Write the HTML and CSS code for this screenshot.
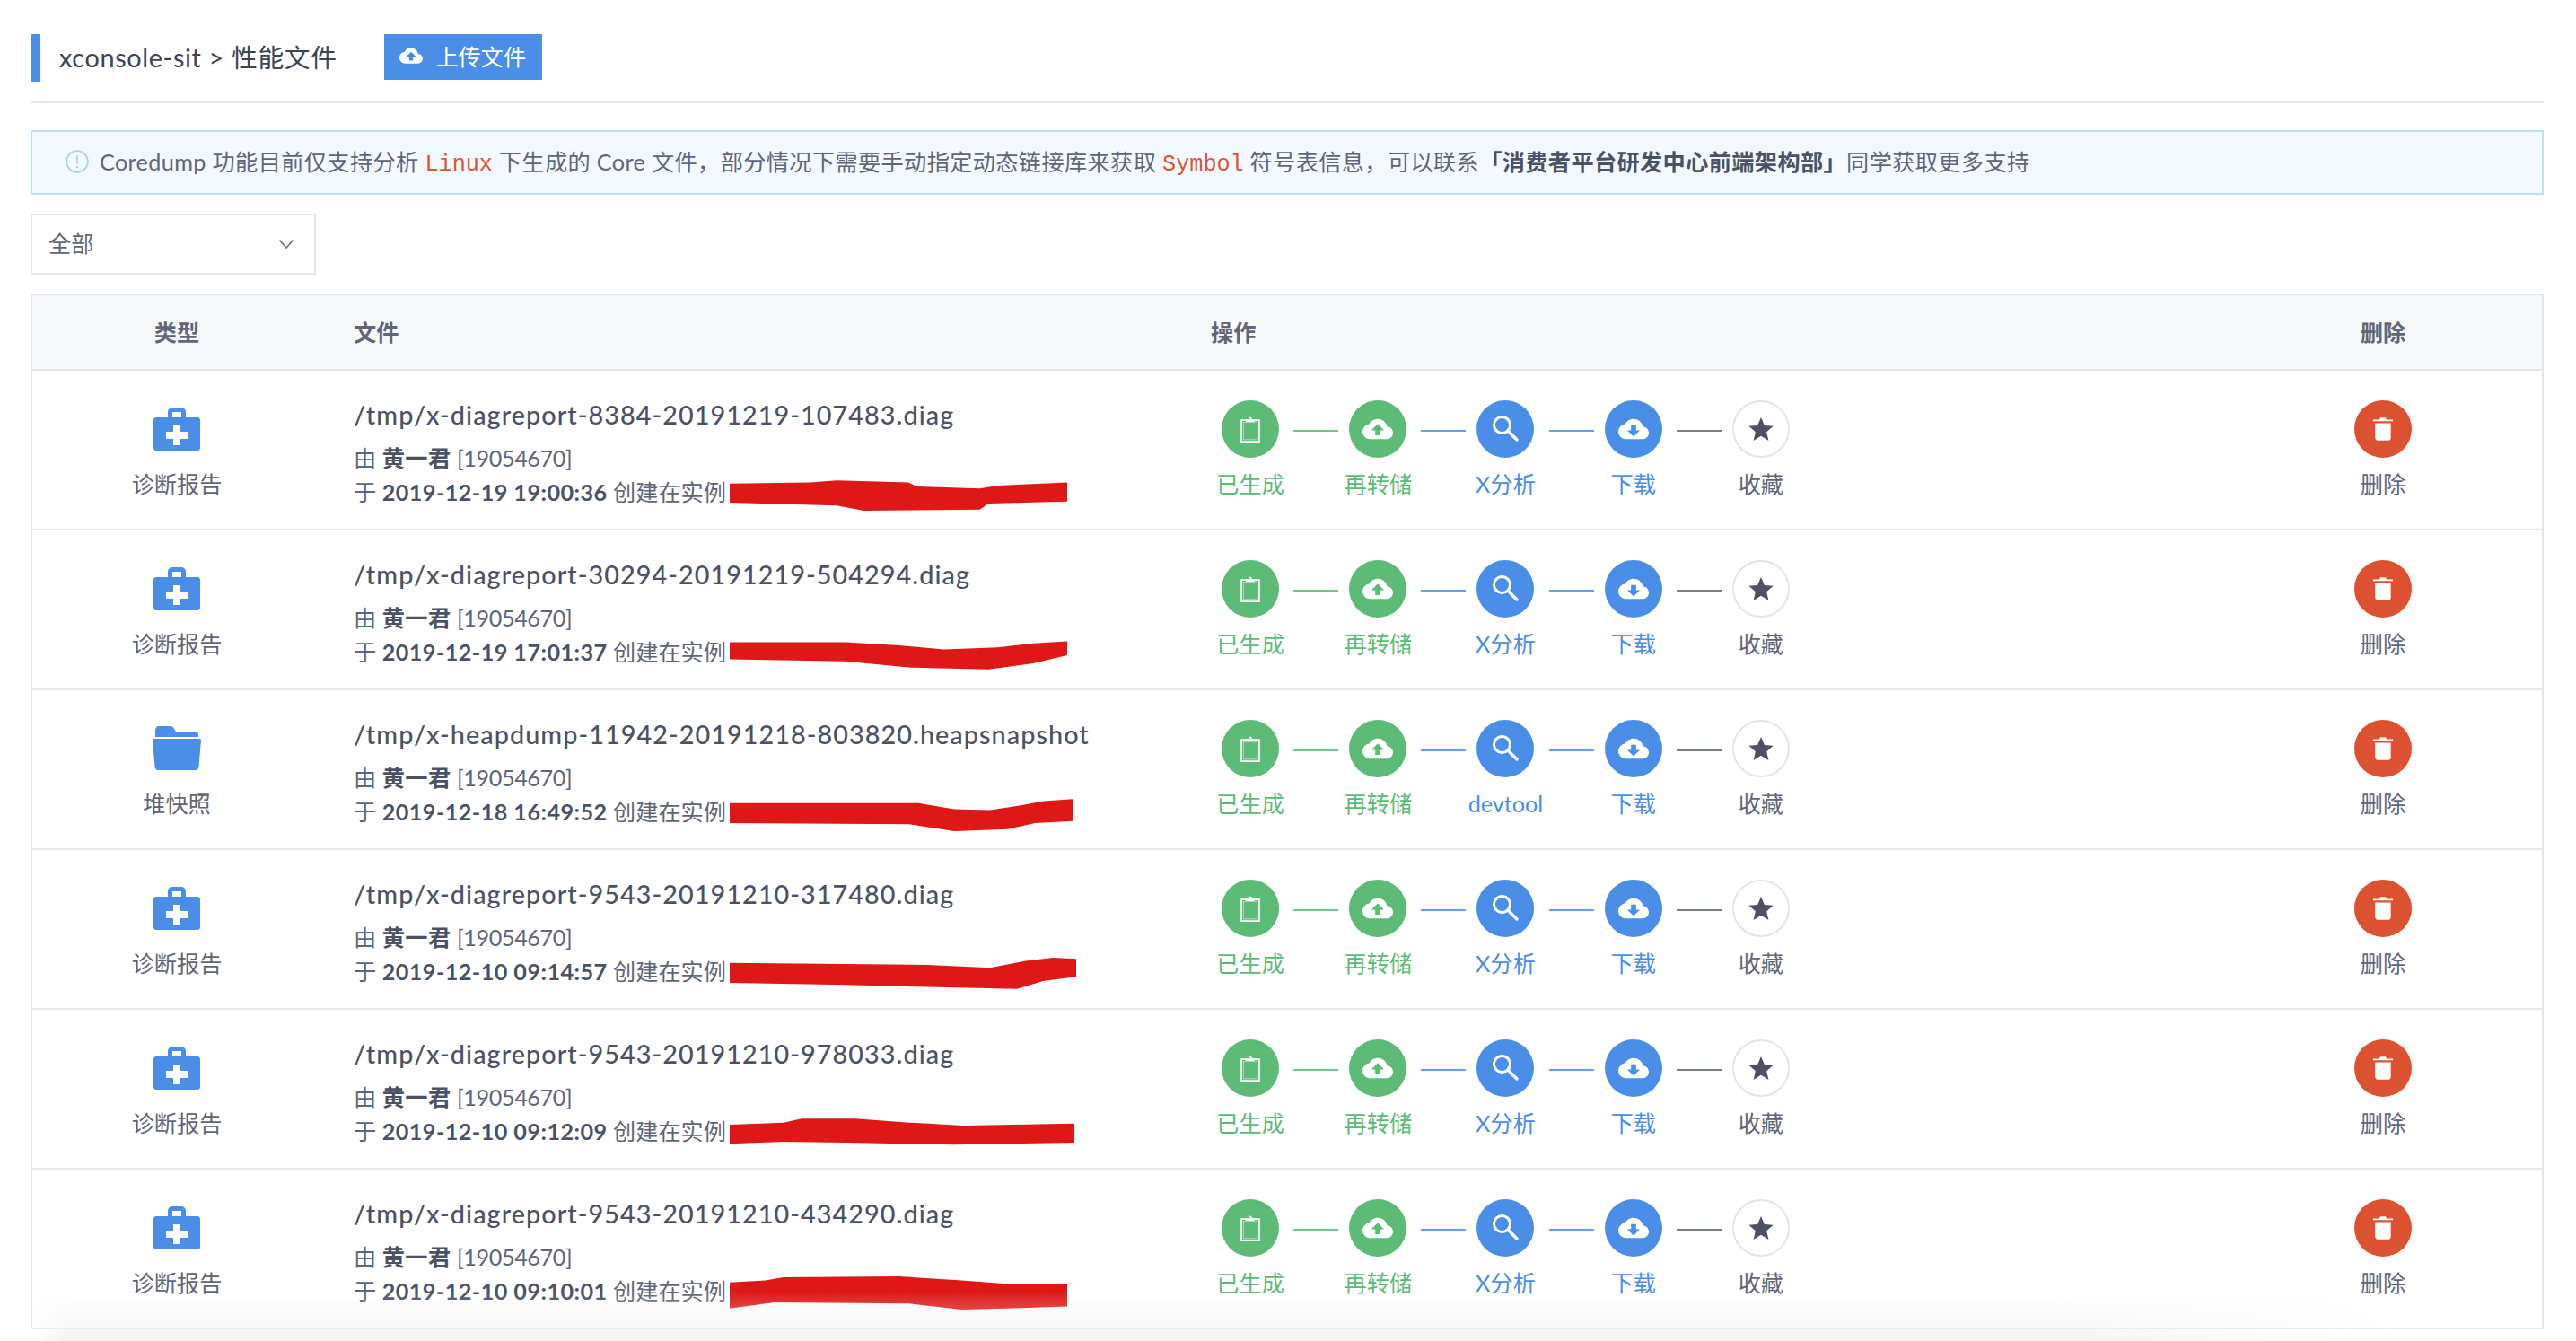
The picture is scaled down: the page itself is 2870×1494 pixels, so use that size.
FILE: index.html
```html
<!DOCTYPE html>
<html lang="zh">
<head>
<meta charset="utf-8">
<title>性能文件</title>
<link rel="stylesheet" href="styles.css">
</head>
<body>
<svg class="sprite" aria-hidden="true">
  <symbol id="i-up" viewBox="0 0 24 24"><path fill="currentColor" fill-rule="evenodd" d="M19.35 10.04A7.49 7.49 0 0 0 12 4C9.11 4 6.6 5.64 5.35 8.04A5.994 5.994 0 0 0 0 14c0 3.31 2.69 6 6 6h13c2.76 0 5-2.24 5-5 0-2.64-2.05-4.78-4.65-4.96zM14 13v4h-4v-4H7l5-5 5 5h-3z"/></symbol>
  <symbol id="i-down" viewBox="0 0 24 24"><path fill="currentColor" fill-rule="evenodd" d="M19.35 10.04A7.49 7.49 0 0 0 12 4C9.11 4 6.6 5.64 5.35 8.04A5.994 5.994 0 0 0 0 14c0 3.31 2.69 6 6 6h13c2.76 0 5-2.24 5-5 0-2.64-2.05-4.78-4.65-4.96zM17 13l-5 5-5-5h3V9h4v4h3z"/></symbol>
  <symbol id="i-clip" viewBox="0 0 24 32"><path fill="none" stroke="currentColor" stroke-width="1.900" d="M1 4.500h22v26.500H1z"/><path fill="none" stroke="currentColor" stroke-opacity=".6" stroke-width="1" d="M3.500 7h17v21.500h-17z"/><path fill="currentColor" fill-rule="evenodd" d="M7 6.500V3.500h2.800C10 1.500 11 .5 12 .5s2 1 2.200 3H17v3zM12 2.500a1 1 0 1 0 0 2 1 1 0 0 0 0-2z"/></symbol>
  <symbol id="i-search" viewBox="0 0 30 30"><circle cx="11.500" cy="11.500" r="9" fill="none" stroke="currentColor" stroke-width="3"/><path d="M18 18l10 10" stroke="currentColor" stroke-width="3.400" stroke-linecap="round"/></symbol>
  <symbol id="i-star" viewBox="0 0 24 24"><path fill="currentColor" d="M12 .8l3.300 7.800 8.400.7-6.400 5.500 1.900 8.300L12 18.700l-7.200 4.400 1.900-8.300L.3 9.300l8.400-.7z"/></symbol>
  <symbol id="i-trash" viewBox="0 0 24 28"><path fill="currentColor" d="M8 1.500C8 .7 8.600 0 9.500 0h5c.9 0 1.500.7 1.500 1.500V2.500h8v2H0v-2h8zM2.500 7h19v18c0 1.700-1.300 3-3 3h-13c-1.700 0-3-1.300-3-3z"/></symbol>
  <symbol id="i-case" viewBox="0 0 52 48"><path fill="currentColor" fill-rule="evenodd" d="M16 11V5c0-2.800 2.200-5 5-5h10c2.800 0 5 2.200 5 5v6h13c1.700 0 3 1.300 3 3v31c0 1.700-1.300 3-3 3H3c-1.700 0-3-1.300-3-3V14c0-1.700 1.300-3 3-3zM21 5v6h10V5zM22 20v7h-8v8h8v7h8v-7h8v-8h-8v-7z"/></symbol>
  <symbol id="i-folder" viewBox="0 0 54 50"><path fill="currentColor" d="M3 6c0-3 1.500-5 4-5h13c2 0 3 1 4 3l2 3h21c3 0 4 1.500 4 4v2H3z"/><path fill="currentColor" d="M1.500 15h51c1 0 1.500.6 1.500 1.500L51.500 46c-.2 2.500-1.500 4-4 4H6.500c-2.500 0-3.800-1.500-4-4L0 16.500C0 15.600.5 15 1.500 15z"/></symbol>
</svg>

<main class="page">
  <header class="title-bar">
    <span class="title-mark"></span>
    <h1 class="title-text">xconsole-sit &gt; 性能文件</h1>
    <button class="upload-btn"><svg class="upload-icon"><use href="#i-up"/></svg>上传文件</button>
  </header>
  <div class="rule"></div>

  <div class="alert">
    <svg class="alert-icon" viewBox="0 0 26 26"><circle cx="13" cy="13" r="11.800" fill="none" stroke="#9fd3f7" stroke-width="1.800"/><path d="M13 6.500v9" stroke="#9fd3f7" stroke-width="1.800"/><circle cx="13" cy="19" r="1.200" fill="#9fd3f7"/></svg>
    <p class="alert-text">Coredump 功能目前仅支持分析 <code>Linux</code> 下生成的 Core 文件，部分情况下需要手动指定动态链接库来获取 <code>Symbol</code> 符号表信息，可以联系<b>「消费者平台研发中心前端架构部」</b>同学获取更多支持</p>
  </div>

  <div class="select">
    <span>全部</span>
    <svg class="select-arrow" viewBox="0 0 18 12"><path d="M1.500 1.500L9 10l7.500-8.500" fill="none" stroke="#6b7285" stroke-width="1.800"/></svg>
  </div>

  <section class="table">
    <div class="row head">
      <div class="cell-type">类型</div>
      <div class="cell-file">文件</div>
      <div class="cell-ops">操作</div>
      <div class="cell-del">删除</div>
    </div>

    <div class="row">
      <div class="col-type"><svg class="type-icon"><use href="#i-case"/></svg><span>诊断报告</span></div>
      <div class="col-file">
        <div class="file-name">/tmp/x-diagreport-8384-20191219-107483.diag</div>
        <div class="meta">由 <b>黄一君</b> <span class="uid">[19054670]</span></div>
        <div class="meta">于 <b>2019-12-19 19:00:36</b> 创建在实例 <svg class="scribble" viewBox="0 0 380 34" preserveAspectRatio="none"><polygon points="0,6 90,5 120,3 200,5 210,9 280,11 300,8 378,5 378,24 290,26 280,32 150,33 120,28 0,25"/></svg></div>
      </div>
      <div class="col-ops">
        <div class="step green"><span class="dot"><svg class="ic-clip"><use href="#i-clip"/></svg></span><span class="label">已生成</span></div>
        <div class="step green line-blue"><span class="dot"><svg class="ic-cloud"><use href="#i-up"/></svg></span><span class="label">再转储</span></div>
        <div class="step blue"><span class="dot"><svg class="ic-search"><use href="#i-search"/></svg></span><span class="label">X分析</span></div>
        <div class="step blue line-dark"><span class="dot"><svg class="ic-cloud"><use href="#i-down"/></svg></span><span class="label">下载</span></div>
        <div class="step last"><span class="dot"><svg class="ic-star"><use href="#i-star"/></svg></span><span class="label">收藏</span></div>
      </div>
      <div class="col-del"><span class="dot"><svg class="ic-trash"><use href="#i-trash"/></svg></span><span class="label">删除</span></div>
    </div>

    <div class="row">
      <div class="col-type"><svg class="type-icon"><use href="#i-case"/></svg><span>诊断报告</span></div>
      <div class="col-file">
        <div class="file-name">/tmp/x-diagreport-30294-20191219-504294.diag</div>
        <div class="meta">由 <b>黄一君</b> <span class="uid">[19054670]</span></div>
        <div class="meta">于 <b>2019-12-19 17:01:37</b> 创建在实例 <svg class="scribble" viewBox="0 0 380 34" preserveAspectRatio="none"><polygon points="0,5 130,5 190,8 240,12 300,10 340,6 378,4 378,18 340,26 290,32 200,30 130,24 0,22"/></svg></div>
      </div>
      <div class="col-ops">
        <div class="step green"><span class="dot"><svg class="ic-clip"><use href="#i-clip"/></svg></span><span class="label">已生成</span></div>
        <div class="step green line-blue"><span class="dot"><svg class="ic-cloud"><use href="#i-up"/></svg></span><span class="label">再转储</span></div>
        <div class="step blue"><span class="dot"><svg class="ic-search"><use href="#i-search"/></svg></span><span class="label">X分析</span></div>
        <div class="step blue line-dark"><span class="dot"><svg class="ic-cloud"><use href="#i-down"/></svg></span><span class="label">下载</span></div>
        <div class="step last"><span class="dot"><svg class="ic-star"><use href="#i-star"/></svg></span><span class="label">收藏</span></div>
      </div>
      <div class="col-del"><span class="dot"><svg class="ic-trash"><use href="#i-trash"/></svg></span><span class="label">删除</span></div>
    </div>

    <div class="row">
      <div class="col-type"><svg class="type-icon folder"><use href="#i-folder"/></svg><span>堆快照</span></div>
      <div class="col-file">
        <div class="file-name">/tmp/x-heapdump-11942-20191218-803820.heapsnapshot</div>
        <div class="meta">由 <b>黄一君</b> <span class="uid">[19054670]</span></div>
        <div class="meta">于 <b>2019-12-18 16:49:52</b> 创建在实例 <svg class="scribble wide" viewBox="0 0 384 34" preserveAspectRatio="none"><polygon points="0,6 210,6 250,12 290,13 320,9 350,4 382,2 382,24 340,26 310,32 250,34 200,27 0,26"/></svg></div>
      </div>
      <div class="col-ops">
        <div class="step green"><span class="dot"><svg class="ic-clip"><use href="#i-clip"/></svg></span><span class="label">已生成</span></div>
        <div class="step green line-blue"><span class="dot"><svg class="ic-cloud"><use href="#i-up"/></svg></span><span class="label">再转储</span></div>
        <div class="step blue"><span class="dot"><svg class="ic-search"><use href="#i-search"/></svg></span><span class="label">devtool</span></div>
        <div class="step blue line-dark"><span class="dot"><svg class="ic-cloud"><use href="#i-down"/></svg></span><span class="label">下载</span></div>
        <div class="step last"><span class="dot"><svg class="ic-star"><use href="#i-star"/></svg></span><span class="label">收藏</span></div>
      </div>
      <div class="col-del"><span class="dot"><svg class="ic-trash"><use href="#i-trash"/></svg></span><span class="label">删除</span></div>
    </div>

    <div class="row">
      <div class="col-type"><svg class="type-icon"><use href="#i-case"/></svg><span>诊断报告</span></div>
      <div class="col-file">
        <div class="file-name">/tmp/x-diagreport-9543-20191210-317480.diag</div>
        <div class="meta">由 <b>黄一君</b> <span class="uid">[19054670]</span></div>
        <div class="meta">于 <b>2019-12-10 09:14:57</b> 创建在实例 <svg class="scribble wider" viewBox="0 0 386 34" preserveAspectRatio="none"><polygon points="0,6 220,8 290,11 330,4 360,1 386,2 386,20 350,24 320,32 220,30 130,28 0,26"/></svg></div>
      </div>
      <div class="col-ops">
        <div class="step green"><span class="dot"><svg class="ic-clip"><use href="#i-clip"/></svg></span><span class="label">已生成</span></div>
        <div class="step green line-blue"><span class="dot"><svg class="ic-cloud"><use href="#i-up"/></svg></span><span class="label">再转储</span></div>
        <div class="step blue"><span class="dot"><svg class="ic-search"><use href="#i-search"/></svg></span><span class="label">X分析</span></div>
        <div class="step blue line-dark"><span class="dot"><svg class="ic-cloud"><use href="#i-down"/></svg></span><span class="label">下载</span></div>
        <div class="step last"><span class="dot"><svg class="ic-star"><use href="#i-star"/></svg></span><span class="label">收藏</span></div>
      </div>
      <div class="col-del"><span class="dot"><svg class="ic-trash"><use href="#i-trash"/></svg></span><span class="label">删除</span></div>
    </div>

    <div class="row">
      <div class="col-type"><svg class="type-icon"><use href="#i-case"/></svg><span>诊断报告</span></div>
      <div class="col-file">
        <div class="file-name">/tmp/x-diagreport-9543-20191210-978033.diag</div>
        <div class="meta">由 <b>黄一君</b> <span class="uid">[19054670]</span></div>
        <div class="meta">于 <b>2019-12-10 09:12:09</b> 创建在实例 <svg class="scribble wide" viewBox="0 0 384 34" preserveAspectRatio="none"><polygon points="0,8 60,6 80,2 140,2 200,6 260,9 384,7 384,26 250,28 130,26 60,25 0,27"/></svg></div>
      </div>
      <div class="col-ops">
        <div class="step green"><span class="dot"><svg class="ic-clip"><use href="#i-clip"/></svg></span><span class="label">已生成</span></div>
        <div class="step green line-blue"><span class="dot"><svg class="ic-cloud"><use href="#i-up"/></svg></span><span class="label">再转储</span></div>
        <div class="step blue"><span class="dot"><svg class="ic-search"><use href="#i-search"/></svg></span><span class="label">X分析</span></div>
        <div class="step blue line-dark"><span class="dot"><svg class="ic-cloud"><use href="#i-down"/></svg></span><span class="label">下载</span></div>
        <div class="step last"><span class="dot"><svg class="ic-star"><use href="#i-star"/></svg></span><span class="label">收藏</span></div>
      </div>
      <div class="col-del"><span class="dot"><svg class="ic-trash"><use href="#i-trash"/></svg></span><span class="label">删除</span></div>
    </div>

    <div class="row">
      <div class="col-type"><svg class="type-icon"><use href="#i-case"/></svg><span>诊断报告</span></div>
      <div class="col-file">
        <div class="file-name">/tmp/x-diagreport-9543-20191210-434290.diag</div>
        <div class="meta">由 <b>黄一君</b> <span class="uid">[19054670]</span></div>
        <div class="meta">于 <b>2019-12-10 09:10:01</b> 创建在实例 <svg class="scribble" viewBox="0 0 380 34" preserveAspectRatio="none"><polygon points="0,6 40,4 60,1 190,0 260,4 320,8 378,8 378,30 310,32 260,33 200,27 50,26 0,32"/></svg></div>
      </div>
      <div class="col-ops">
        <div class="step green"><span class="dot"><svg class="ic-clip"><use href="#i-clip"/></svg></span><span class="label">已生成</span></div>
        <div class="step green line-blue"><span class="dot"><svg class="ic-cloud"><use href="#i-up"/></svg></span><span class="label">再转储</span></div>
        <div class="step blue"><span class="dot"><svg class="ic-search"><use href="#i-search"/></svg></span><span class="label">X分析</span></div>
        <div class="step blue line-dark"><span class="dot"><svg class="ic-cloud"><use href="#i-down"/></svg></span><span class="label">下载</span></div>
        <div class="step last"><span class="dot"><svg class="ic-star"><use href="#i-star"/></svg></span><span class="label">收藏</span></div>
      </div>
      <div class="col-del"><span class="dot"><svg class="ic-trash"><use href="#i-trash"/></svg></span><span class="label">删除</span></div>
    </div>
  </section>
  <div class="bottom-fade"></div>
</main>
</body>
</html>
```
FILE: styles.css
```css
* { box-sizing: border-box; }
html, body { margin: 0; height: 100%; background: #fff; }
body {
  font-family: Lato, "Noto Sans CJK SC", sans-serif;
  font-size: 25.2px;
  color: #5f6678;
  overflow: hidden;
}
.sprite { display: none; }
.page {
  position: relative;
  height: 1494px;
  overflow: hidden;
  padding: 38px 36px 0 34px;
}
.title-bar { display: flex; align-items: flex-start; height: 53px; }
.title-mark { width: 11px; height: 53px; background: #4a8ee8; }
.title-text {
  margin: 0 0 0 21px;
  font-size: 28.8px;
  font-weight: 400;
  line-height: 53px;
  letter-spacing: .65px;
  color: #3d4455;
}
.upload-btn {
  display: flex;
  align-items: center;
  justify-content: center;
  width: 176px;
  height: 51px;
  margin-left: 52px;
  border: 0;
  background: #4a8ee8;
  color: #fff;
  font: inherit;
  padding: 0 0 3px;
}
.upload-icon { width: 26px; height: 26px; margin-right: 14px; }
.rule { height: 3px; margin-top: 21px; background: #e4e6eb; }
.alert {
  display: flex;
  align-items: center;
  height: 72px;
  margin-top: 30px;
  padding: 0 0 3px 37px;
  background: #f3f9fe;
  border: 2px solid #bcdffb;
}
.alert-icon { width: 26px; height: 26px; margin-right: 12px; }
.alert-text { margin: 0; white-space: nowrap; letter-spacing: .37px; }
.alert-text code { font-family: "Liberation Mono", monospace; color: #dd5433; letter-spacing: 0; }
.alert-text b { font-weight: 700; color: #4b5265; }
.select {
  display: flex;
  align-items: center;
  justify-content: space-between;
  width: 318px;
  height: 68px;
  margin-top: 21px;
  padding: 0 22px 4px 18px;
  border: 2px solid #e4e6eb;
}
.select-arrow { width: 18px; height: 12px; margin-top: 4px; }
.table {
  margin-top: 21px;
  border: 2px solid #e4e6eb;
  border-bottom: 0;
}
.row {
  display: grid;
  grid-template-columns: 322px 955px 1fr 354px;
  height: 178px;
  border-bottom: 2px solid #e9eaee;
}
.row.head {
  height: 84px;
  padding-bottom: 2px;
  align-items: center;
  background: #f7f8f9;
  font-weight: 700;
  border-bottom-color: #e4e6eb;
}
.cell-type, .cell-del { text-align: center; }
.cell-file { padding-left: 36px; }
.cell-ops { padding-left: 36px; }
.col-type {
  display: flex;
  flex-direction: column;
  align-items: center;
  padding-top: 41px;
}
.col-type span { line-height: 36px; margin-top: 19px; }
.type-icon { width: 52px; height: 48px; color: #4a8ee8; }
.type-icon.folder { width: 54px; height: 50px; margin-top: -2px; margin-bottom: 0; }
.col-file { padding: 27px 0 0 36px; white-space: nowrap; }
.file-name {
  font-size: 28.8px;
  font-weight: 500;
  line-height: 44px;
  letter-spacing: 1.05px;
  color: #4b5265;
  margin-bottom: 7px;
}
.meta { line-height: 38px; height: 38px; }
.meta b { font-weight: 700; color: #4b5265; letter-spacing: .45px; }
.uid { letter-spacing: -.4px; }
.scribble {
  width: 378px;
  height: 38px;
  vertical-align: -12px;
  fill: #de1816;
  margin-left: -2px;
}
.scribble.wide { width: 384px; }
.scribble.wider { width: 386px; }
.col-ops { display: flex; padding: 33px 0 0 9px; }
.step {
  position: relative;
  display: flex;
  flex-direction: column;
  align-items: center;
  width: 142.2px;
  --tone: #5f6678;
}
.step::after {
  content: "";
  position: absolute;
  left: 119.2px;
  top: 33px;
  width: 50px;
  height: 2px;
  background: var(--line, var(--tone));
  opacity: .85;
}
.step.last::after { display: none; }
.step.green { --tone: #5cbb75; }
.step.blue { --tone: #4a8ee8; }
.step.line-blue { --line: #4a8ee8; }
.step.line-dark { --line: #5f6678; }
.dot {
  display: flex;
  align-items: center;
  justify-content: center;
  width: 64px;
  height: 64px;
  border-radius: 50%;
  background: var(--tone);
  color: #fff;
}
.label { line-height: 36px; margin-top: 11px; color: var(--tone); }
.step.last .dot { background: #fff; border: 2px solid #e4e6eb; color: #4b5265; }
.ic-clip { width: 22px; height: 29px; }
.ic-cloud { width: 34px; height: 34px; }
.ic-search { width: 30px; height: 30px; margin-top: -2px; }
.ic-star { width: 28px; height: 28px; }
.ic-trash { width: 22px; height: 26px; }
.col-del {
  display: flex;
  flex-direction: column;
  align-items: center;
  padding-top: 33px;
  --tone: #dc5230;
}
.col-del .label { color: #5f6678; }
.bottom-fade {
  position: absolute;
  left: 36px;
  right: 200px;
  bottom: 0;
  height: 56px;
  background: linear-gradient(to bottom, rgba(235,236,238,0), rgba(235,236,238,.6));
  -webkit-mask-image: linear-gradient(to right, transparent, #000 40px, #000 85%, transparent);
  mask-image: linear-gradient(to right, transparent, #000 40px, #000 85%, transparent);
  pointer-events: none;
}
```
